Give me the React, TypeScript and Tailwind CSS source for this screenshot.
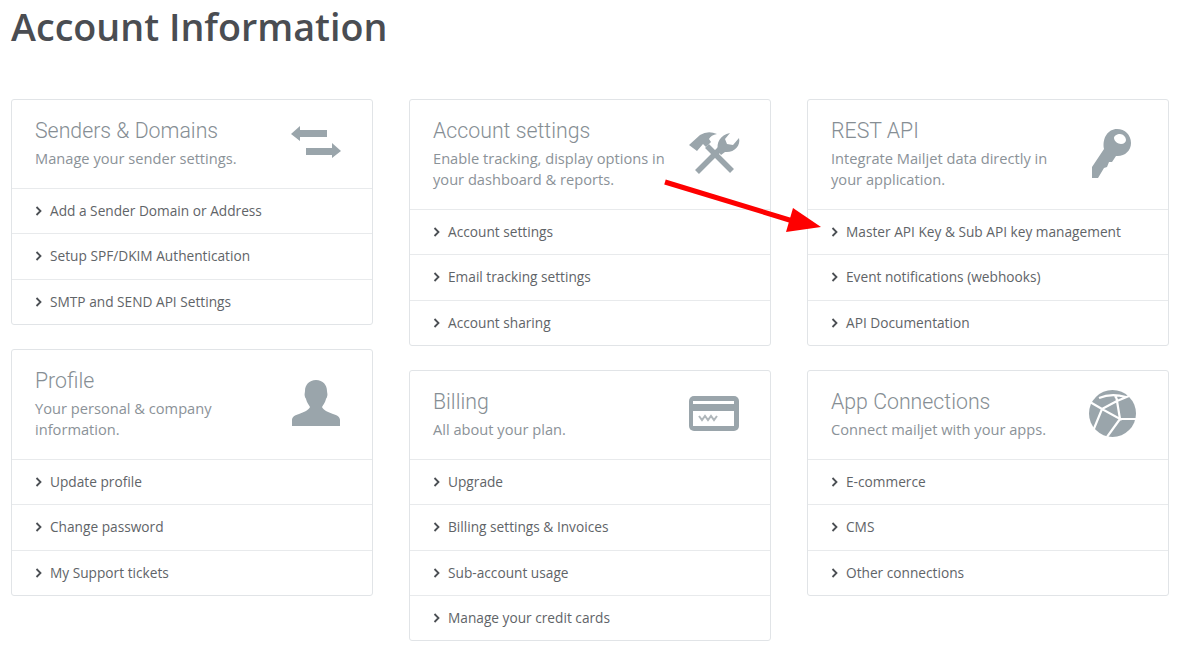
import React from 'react';

const iconColor = '#9aa5ab';

function ArrowsIcon() {
  return (
    <svg width="50" height="32" viewBox="0 0 50 32" fill={iconColor} className="block">
      <path d="M0 8 L9 0 V4 H36 V11 H9 V15 Z" />
      <path d="M50 25 L41 17 V22 H15 V29 H41 V32 Z" />
    </svg>
  );
}

function ToolsIcon() {
  return (
    <svg width="53" height="48" viewBox="0 0 53 48" fill={iconColor} className="block">
      <path d="M1 15 L12 5 Q20 0 29 4 Q23 5 21 9 L23 12 L18 17 L15 14 L9 21 Z" />
      <path d="M19 16 L44 41" stroke={iconColor} strokeWidth="5.5" fill="none" />
      <path d="M9 42 L32 19" stroke={iconColor} strokeWidth="5.5" fill="none" />
      <path d="M30 21 C28 13 32 5 42 3 L37 9 L39 14 L45 15 L51 8 C53 16 46 23 37 22 L33 25 Z" />
    </svg>
  );
}

function KeyIcon() {
  return (
    <svg width="40" height="50" viewBox="0 0 40 50" fill={iconColor} className="block">
      <path
        fillRule="evenodd"
        d="M25 0 C33 0 39 6 39 14 C39 22 32 28 24 27 L20 33 L17 33 L15 38 L12 39 L6 49 L0 49 L0 38 L12 20 C10 9 16 0 25 0 Z M28 5 C25 5 22 7 22 9 C22 12 26 15 29 15 C32 15 34 13 34 11 C34 8 31 5 28 5 Z"
      />
    </svg>
  );
}

function PersonIcon() {
  return (
    <svg width="48" height="46" viewBox="0 0 48 46" fill={iconColor} className="block">
      <path d="M24 0 C31 0 35 5 35 11 C35 13 36 14 35 17 C35 18 34 18 34 19 C33 23 31 25 30 27 C31 30 36 32 41 34 C45 35 48 37 48 40 V46 H0 V40 C0 37 3 35 7 34 C12 32 17 30 18 27 C17 25 15 23 14 19 C14 18 13 18 13 17 C12 14 13 13 13 11 C13 5 17 0 24 0 Z" />
    </svg>
  );
}

function CardIcon() {
  return (
    <svg width="50" height="35" viewBox="0 0 50 35" className="block">
      <rect width="50" height="35" rx="5" fill={iconColor} />
      <rect x="4" y="5" width="41" height="3" fill="#fff" />
      <rect x="4" y="15" width="41" height="15" fill="#fff" />
      <path d="M10 20 L13 24 L16 20 L19 24 L22 20 L25 24 L28 20" fill="none" stroke="#b0b7bb" strokeWidth="2" />
    </svg>
  );
}

function GlobeIcon() {
  return (
    <svg width="47" height="47" viewBox="0 0 47 47" className="block">
      <circle cx="23.5" cy="23.5" r="23.5" fill={iconColor} />
      <path
        d="M1 12 L13 19 L28 11 L31 29 L13 19 L4 41 M31 29 L18 47 M31 29 L47 29 M28 11 L40 6 M28 11 Q28 8 26 6 M10 8 Q22 3 37 7"
        fill="none"
        stroke="#fff"
        strokeWidth="2.2"
      />
    </svg>
  );
}

function Chevron() {
  return (
    <svg width="7" height="10" viewBox="0 0 7 10" className="mr-[8px] shrink-0">
      <path d="M1.5 1 L5.5 5 L1.5 9" fill="none" stroke="#4b4f54" strokeWidth="1.8" />
    </svg>
  );
}

interface Section {
  title: string;
  desc: React.ReactNode;
  icon: React.ReactNode;
  iconClass: string;
  links: string[];
}

const columns: Section[][] = [
  [
    {
      title: 'Senders & Domains',
      desc: 'Manage your sender settings.',
      icon: <ArrowsIcon />,
      iconClass: 'mt-[10px] mr-[8px]',
      links: ['Add a Sender Domain or Address', 'Setup SPF/DKIM Authentication', 'SMTP and SEND API Settings'],
    },
    {
      title: 'Profile',
      desc: (
        <>
          Your personal & company
          <br />
          information.
        </>
      ),
      icon: <PersonIcon />,
      iconClass: 'mt-[14px] mr-[9px]',
      links: ['Update profile', 'Change password', 'My Support tickets'],
    },
  ],
  [
    {
      title: 'Account settings',
      desc: (
        <>
          Enable tracking, display options in
          <br />
          your dashboard & reports.
        </>
      ),
      icon: <ToolsIcon />,
      iconClass: 'mt-[14px] mr-[6px]',
      links: ['Account settings', 'Email tracking settings', 'Account sharing'],
    },
    {
      title: 'Billing',
      desc: 'All about your plan.',
      icon: <CardIcon />,
      iconClass: 'mt-[9px] mr-[8px]',
      links: ['Upgrade', 'Billing settings & Invoices', 'Sub-account usage', 'Manage your credit cards'],
    },
  ],
  [
    {
      title: 'REST API',
      desc: (
        <>
          Integrate Mailjet data directly in
          <br />
          your application.
        </>
      ),
      icon: <KeyIcon />,
      iconClass: 'mt-[13px] mr-[13px]',
      links: ['Master API Key & Sub API key management', 'Event notifications (webhooks)', 'API Documentation'],
    },
    {
      title: 'App Connections',
      desc: 'Connect mailjet with your apps.',
      icon: <GlobeIcon />,
      iconClass: 'mt-[3px] mr-[9px]',
      links: ['E-commerce', 'CMS', 'Other connections'],
    },
  ],
];

function InfoCard({ section }: { section: Section }) {
  return (
    <div className="rounded-[3px] border border-[#e1e4e7] bg-white">
      <div className="flex items-start justify-between pt-[16px] pb-[19px] pl-[23px] pr-[23px]">
        <div>
          <h2 className="h-[32px] font-['Roboto',sans-serif] text-[21.3px] leading-[29px] font-light text-[#868e94]">
            {section.title}
          </h2>
          <p className="font-['Open_Sans',sans-serif] text-[14.65px] leading-[21px] text-[#8b9298]">{section.desc}</p>
        </div>
        <div className={section.iconClass}>{section.icon}</div>
      </div>
      {section.links.map((link) => (
        <div
          key={link}
          className="flex h-[45.33px] items-center border-t border-[#e8eaec] pl-[23px] font-['Open_Sans',sans-serif] text-[13.7px] text-[#5f6468]"
        >
          <Chevron />
          {link}
        </div>
      ))}
    </div>
  );
}

export default function App() {
  return (
    <div className="relative h-[652px] w-[1181px] overflow-hidden bg-white px-[11px]">
      <h1 className="h-[99px] pt-[2px] font-['Open_Sans',sans-serif] text-[37.7px] leading-[50px] font-semibold text-[#4a4d52]">
        Account Information
      </h1>
      <div className="grid grid-cols-[362px_362px_362px] gap-x-9">
        {columns.map((col, i) => (
          <div key={i} className="flex flex-col gap-6">
            {col.map((section) => (
              <InfoCard key={section.title} section={section} />
            ))}
          </div>
        ))}
      </div>
      {/* red annotation arrow */}
      <svg className="absolute top-[175px] left-[660px]" width="170" height="65" viewBox="0 0 170 65">
        <path d="M5 7 L136 47" stroke="#fe0000" strokeWidth="5" />
        <path d="M161 52 L133 33 L126 57 Z" fill="#fe0000" />
      </svg>
    </div>
  );
}
